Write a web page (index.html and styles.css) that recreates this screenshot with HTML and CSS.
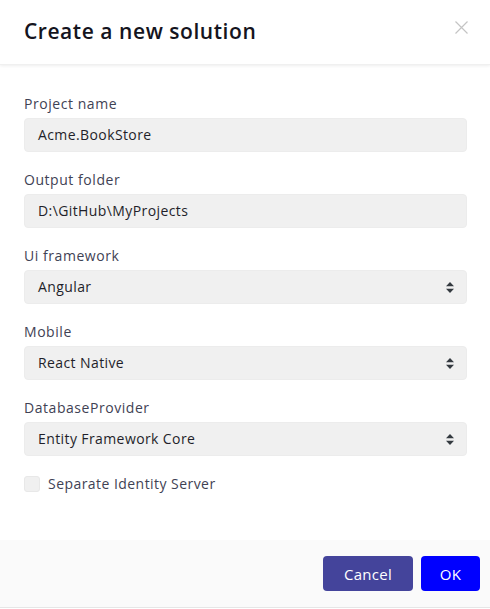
FILE: index.html
```html
<!DOCTYPE html>
<html>
<head>
<meta charset="utf-8">
<link rel="stylesheet" href="styles.css">
</head>
<body>
<div class="modal">
  <div class="modal-header">
    <h1 class="title">Create a new solution</h1>
    <span class="close" aria-label="close">
      <svg width="13" height="13" viewBox="0 0 13 13"><path d="M0.5 0.5 L12.5 12.5 M12.5 0.5 L0.5 12.5" stroke="#c4c4c4" stroke-width="1.2" fill="none"/></svg>
    </span>
  </div>
  <div class="modal-body">
    <div class="field">
      <label class="label">Project name</label>
      <div class="control">Acme.BookStore</div>
    </div>
    <div class="field">
      <label class="label">Output folder</label>
      <div class="control">D:\GitHub\MyProjects</div>
    </div>
    <div class="field">
      <label class="label">Ui framework</label>
      <div class="control select">Angular<span class="arrows"><svg width="8" height="11" viewBox="0 0 8 11"><path d="M4 0 L8 4.3 L0 4.3 Z M4 11 L8 6.7 L0 6.7 Z" fill="#343a40"/></svg></span></div>
    </div>
    <div class="field">
      <label class="label">Mobile</label>
      <div class="control select">React Native<span class="arrows"><svg width="8" height="11" viewBox="0 0 8 11"><path d="M4 0 L8 4.3 L0 4.3 Z M4 11 L8 6.7 L0 6.7 Z" fill="#343a40"/></svg></span></div>
    </div>
    <div class="field">
      <label class="label">DatabaseProvider</label>
      <div class="control select">Entity Framework Core<span class="arrows"><svg width="8" height="11" viewBox="0 0 8 11"><path d="M4 0 L8 4.3 L0 4.3 Z M4 11 L8 6.7 L0 6.7 Z" fill="#343a40"/></svg></span></div>
    </div>
    <div class="check">
      <span class="box"></span>
      <span class="check-label">Separate Identity Server</span>
    </div>
  </div>
  <div class="modal-footer">
    <button class="btn btn-cancel">Cancel</button>
    <button class="btn btn-ok">OK</button>
  </div>
</div>
</body>
</html>
```

FILE: styles.css
```css
* { box-sizing: border-box; }
html, body { margin: 0; padding: 0; background: #fff; }
body {
  font-family: "Open Sans", "Liberation Sans", sans-serif;
  color: #212529;
  width: 490px;
  height: 609px;
  overflow: hidden;
}
.modal {
  width: 490px;
  height: 608px;
  display: flex;
  flex-direction: column;
  border-bottom: 1px solid #e6e6e6;
}
.modal-header {
  height: 65px;
  display: flex;
  align-items: flex-start;
  justify-content: space-between;
  padding: 17px 22px 0 24px;
  box-shadow: 0 1px 3px rgba(0,0,0,0.07);
  border-bottom: 1px solid #f0f0f0;
  position: relative;
  z-index: 1;
}
.title {
  margin: 0;
  font-size: 21px;
  font-weight: 600;
  line-height: 29px;
  color: #141420;
  letter-spacing: 0.55px;
}
.close { display: block; margin-top: 4px; line-height: 0; }
.modal-body {
  flex: 1;
  padding: 28px 23px 0 24px;
}
.field { margin-bottom: 17px; }
.label {
  display: block;
  font-size: 14px;
  line-height: 21px;
  color: #3f4254;
  margin-bottom: 4px;
  letter-spacing: 0.55px;
}
.control {
  height: 34px;
  background: #f0f0f0;
  border: 1px solid #ececec;
  border-radius: 4px;
  padding: 0 13px;
  font-size: 14px;
  line-height: 32px;
  color: #1f1f2a;
  display: flex;
  align-items: center;
  letter-spacing: 0.4px;
}
.select { justify-content: space-between; padding-right: 12px; }
.arrows { line-height: 0; display: block; }
.check {
  display: flex;
  align-items: center;
  margin-top: 16px;
}
.box {
  width: 16px;
  height: 16px;
  border: 1px solid #e8e8e8;
  background: #f0f0f0;
  border-radius: 3px;
  margin-right: 8px;
}
.check-label { font-size: 14px; color: #3f4254; line-height: 21px; letter-spacing: 0.45px; }
.modal-footer {
  height: 67px;
  background: #fafafa;
  display: flex;
  justify-content: flex-end;
  align-items: flex-start;
  padding: 16px 10px 0 0;
  gap: 8px;
}
.btn {
  height: 35px;
  border: 0;
  border-radius: 4px;
  color: #fff;
  font-family: "Open Sans", "Liberation Sans", sans-serif;
  font-size: 15px;
  letter-spacing: 0.3px;
  padding: 0;
}
.btn-cancel { width: 90px; background: #44449b; }
.btn-ok { width: 59px; background: #0000ff; }
```
